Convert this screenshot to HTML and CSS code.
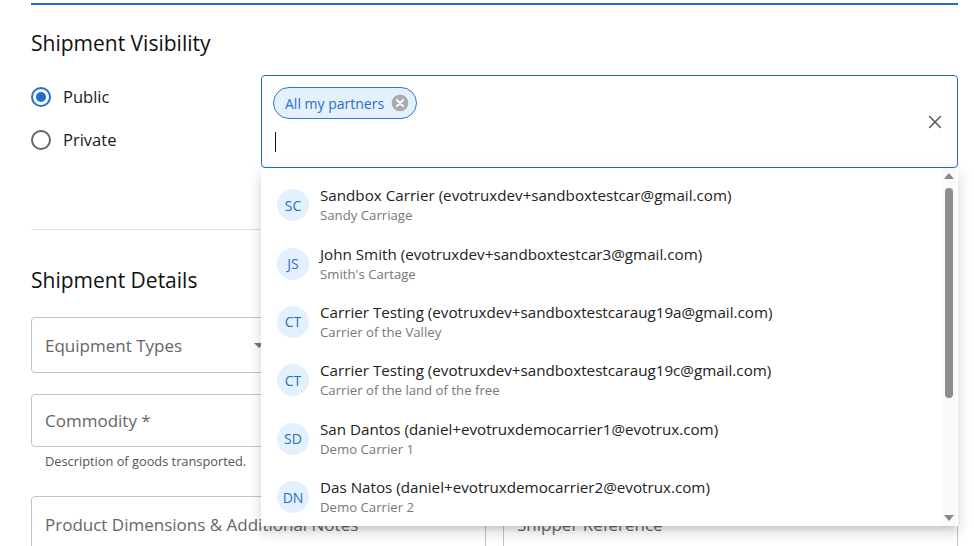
FILE: index.html
```html
<!DOCTYPE html>
<html lang="en">
<head>
  <meta charset="UTF-8">
  <title>Shipment</title>
  <link rel="stylesheet" href="styles.css">
</head>
<body>
  <div class="page">
    <div class="top-rule"></div>

    <h2 class="section-title">Shipment Visibility</h2>
    <div class="visibility-row">
      <div class="radios">
        <label class="radio checked"><span class="radio-dot"></span>Public</label>
        <label class="radio"><span class="radio-dot"></span>Private</label>
      </div>

      <div class="picker">
        <div class="picker-box">
          <div class="picker-tags">
            <span class="chip">All my partners
              <svg class="chip-del" viewBox="0 0 24 24"><circle cx="12" cy="12" r="10" fill="#a9abad"/><path d="M8.3 8.3l7.4 7.4M15.7 8.3l-7.4 7.4" stroke="#fff" stroke-width="2.4" stroke-linecap="round"/></svg>
            </span>
            <div class="picker-input"><span class="caret"></span></div>
          </div>
          <svg class="clear-btn" viewBox="0 0 24 24"><path d="M5.5 5.5l13 13M18.5 5.5l-13 13" stroke="#555" stroke-width="1.8" stroke-linecap="round"/></svg>
        </div>

        <!-- open options list -->
        <div class="options">
          <ul class="option-list" id="option-list"></ul>
          <div class="scrollbar">
            <span class="arrow up"></span>
            <span class="thumb"></span>
            <span class="track"></span>
            <span class="arrow down"></span>
          </div>
        </div>
      </div>
    </div>

    <hr class="divider">

    <h2 class="section-title">Shipment Details</h2>
    <div class="fields">
      <div class="field select"><span class="field-label">Equipment Types</span><span class="select-arrow"></span></div>
      <div></div>
      <div class="field-wrap">
        <div class="field short"><span class="field-label">Commodity *</span></div>
        <div class="helper">Description of goods transported.</div>
      </div>
      <div></div>
      <div class="field tall"><span class="field-label">Product Dimensions &amp; Additional Notes</span></div>
      <div class="field tall"><span class="field-label">Shipper Reference</span></div>
    </div>
  </div>

  <script>
    const carriers = [
      { initials: "SC", name: "Sandbox Carrier (evotruxdev+sandboxtestcar@gmail.com)", company: "Sandy Carriage" },
      { initials: "JS", name: "John Smith (evotruxdev+sandboxtestcar3@gmail.com)", company: "Smith's Cartage" },
      { initials: "CT", name: "Carrier Testing (evotruxdev+sandboxtestcaraug19a@gmail.com)", company: "Carrier of the Valley" },
      { initials: "CT", name: "Carrier Testing (evotruxdev+sandboxtestcaraug19c@gmail.com)", company: "Carrier of the land of the free" },
      { initials: "SD", name: "San Dantos (daniel+evotruxdemocarrier1@evotrux.com)", company: "Demo Carrier 1" },
      { initials: "DN", name: "Das Natos (daniel+evotruxdemocarrier2@evotrux.com)", company: "Demo Carrier 2" }
    ];

    const list = document.getElementById("option-list");
    carriers.forEach(c => {
      const li = document.createElement("li");
      li.className = "option";
      li.innerHTML = `
        <span class="avatar">${c.initials}</span>
        <span class="option-text">
          <span class="option-name">${c.name}</span>
          <span class="option-company">${c.company}</span>
        </span>`;
      list.appendChild(li);
    });
  </script>
</body>
</html>
```

FILE: styles.css
```css
body {
  margin: 0;
  font-family: "Open Sans", "Noto Sans", sans-serif;
  color: #212121;
  background: #fff;
}
.page {
  padding: 3px 16px 0 31px;
  height: 543px;
  overflow: hidden;
}
.top-rule {
  height: 2px;
  background: #1f6fc9;
}
.section-title {
  margin: 0;
  font-size: 21px;
  font-weight: 400;
  line-height: 26px;
  color: #111;
}
.page > .section-title:first-of-type {
  margin-top: 25px;
}

/* visibility */
.visibility-row {
  display: flex;
  margin-top: 19px;
}
.radios {
  width: 230px;
  display: flex;
  flex-direction: column;
  padding-top: 11px;
  gap: 21px;
}
.radio {
  display: flex;
  align-items: center;
  gap: 12px;
  font-size: 16.5px;
  line-height: 22px;
  color: #1b1b1b;
}
.radio-dot {
  width: 16px;
  height: 16px;
  border: 2px solid #666;
  border-radius: 50%;
  position: relative;
}
.radio.checked .radio-dot {
  border-color: #1f6fd0;
}
.radio.checked .radio-dot::after {
  content: "";
  position: absolute;
  left: 3px;
  top: 3px;
  width: 10px;
  height: 10px;
  border-radius: 50%;
  background: #1f6fd0;
}

.picker {
  flex: 1;
  position: relative;
}
.picker-box {
  height: 91px;
  border: 1px solid #1f6fc9;
  border-radius: 4px;
  display: flex;
  align-items: center;
  padding: 0 12px 0 11px;
}
.picker-tags {
  flex: 1;
  align-self: flex-start;
  display: flex;
  flex-direction: column;
  align-items: flex-start;
  gap: 12px;
  padding-top: 11px;
}
.chip {
  display: inline-flex;
  align-items: center;
  gap: 6px;
  height: 30px;
  padding: 0 6px 0 11px;
  border: 1px solid #2f78d0;
  border-radius: 16px;
  background: #e4f1fd;
  color: #2a6fc6;
  font-size: 14px;
}
.chip-del {
  width: 20px;
  height: 20px;
}
.picker-input {
  height: 22px;
  display: flex;
  align-items: center;
  padding-left: 2px;
}
.caret {
  width: 1px;
  height: 20px;
  background: #111;
}
.clear-btn {
  width: 20px;
  height: 20px;
}

/* dropdown */
.options {
  position: absolute;
  left: 0;
  right: 0;
  top: 93px;
  height: 358px;
  background: #fff;
  display: flex;
  box-shadow: 0 5px 5px -3px rgba(0,0,0,0.12), 0 8px 10px 1px rgba(0,0,0,0.08), 0 3px 14px 2px rgba(0,0,0,0.07);
  z-index: 10;
}
.option-list {
  flex: 1;
  list-style: none;
  margin: 0;
  padding: 8px 0 0;
  overflow: hidden;
}
.option {
  height: 58.4px;
  display: flex;
  align-items: center;
  padding: 0 16px;
}
.avatar {
  width: 32px;
  height: 32px;
  border-radius: 50%;
  background: #e3f0fd;
  color: #2b6fc4;
  font-size: 14px;
  display: flex;
  align-items: center;
  justify-content: center;
  margin-right: 11px;
  flex-shrink: 0;
}
.option-text {
  display: flex;
  flex-direction: column;
}
.option-name {
  font-size: 15.2px;
  line-height: 21px;
  color: #222;
}
.option-company {
  font-size: 13.2px;
  line-height: 19px;
  color: #777;
}
.scrollbar {
  width: 15px;
  background: #fafafa;
  display: flex;
  flex-direction: column;
  align-items: center;
  padding: 5px 0;
  margin-right: 2px;
}
.arrow {
  width: 0;
  height: 0;
  border-left: 5px solid transparent;
  border-right: 5px solid transparent;
}
.arrow.up {
  border-bottom: 6px solid #888;
}
.arrow.down {
  border-top: 6px solid #888;
}
.thumb {
  width: 8px;
  height: 210px;
  margin-top: 9px;
  border-radius: 4px;
  background: #8d8d8d;
}
.track {
  flex: 1;
}

.divider {
  margin: 61px 0 0;
  border: 0;
  border-top: 1px solid #dedede;
}
.divider + .section-title {
  margin-top: 37px;
}

/* details */
.fields {
  display: grid;
  grid-template-columns: 1fr 1fr;
  column-gap: 17px;
  row-gap: 21px;
  margin-top: 24px;
}
.field {
  height: 54px;
  border: 1px solid #c4c4c4;
  border-radius: 4px;
  display: flex;
  align-items: center;
  padding: 0 13px;
  position: relative;
}
.field.short {
  height: 51px;
}
.field.tall {
  height: 100px;
  align-items: flex-start;
  padding-top: 16px;
  margin-top: 5px;
}
.field-label {
  font-size: 17px;
  color: #666;
}
.select-arrow {
  position: absolute;
  right: 221px;
  top: 25px;
  border-left: 5px solid transparent;
  border-right: 5px solid transparent;
  border-top: 5px solid #777;
}
.helper {
  font-size: 12.8px;
  color: #555;
  margin: 5px 0 0 14px;
}
```
